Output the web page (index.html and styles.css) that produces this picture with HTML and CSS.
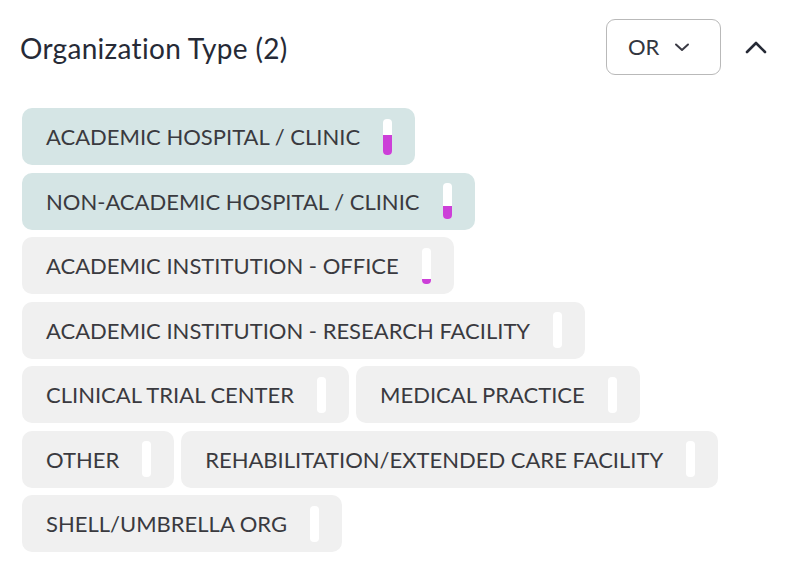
FILE: index.html
```html
<!DOCTYPE html>
<html>
<head>
<meta charset="utf-8">
<link rel="stylesheet" href="styles.css">
</head>
<body>
<div class="panel">
  <div class="header">
    <h2 class="title">Organization Type (2)</h2>
    <button class="op-btn">OR
      <svg class="chev-down" width="16" height="9" viewBox="0 0 16 9"><path d="M2 1.5 L8 7 L14 1.5" fill="none" stroke="#3a3a44" stroke-width="2" stroke-linecap="round" stroke-linejoin="round"/></svg>
    </button>
    <svg class="chev-up" width="22" height="14" viewBox="0 0 22 14"><path d="M2 12 L11 3 L20 12" fill="none" stroke="#262a36" stroke-width="2.6" stroke-linecap="round" stroke-linejoin="round"/></svg>
  </div>
  <div class="chips">
    <div class="chip selected"><span class="label">ACADEMIC HOSPITAL / CLINIC</span><span class="bar"><span class="fill" style="height:55%"></span></span></div>
    <div class="chip selected"><span class="label">NON-ACADEMIC HOSPITAL / CLINIC</span><span class="bar"><span class="fill" style="height:36%"></span></span></div>
    <div class="chip"><span class="label">ACADEMIC INSTITUTION - OFFICE</span><span class="bar"><span class="fill" style="height:12%"></span></span></div>
    <div class="chip"><span class="label">ACADEMIC INSTITUTION - RESEARCH FACILITY</span><span class="bar"><span class="fill" style="height:0%"></span></span></div>
    <div class="chip"><span class="label">CLINICAL TRIAL CENTER</span><span class="bar"><span class="fill" style="height:0%"></span></span></div>
    <div class="chip"><span class="label">MEDICAL PRACTICE</span><span class="bar"><span class="fill" style="height:0%"></span></span></div>
    <div class="chip"><span class="label">OTHER</span><span class="bar"><span class="fill" style="height:0%"></span></span></div>
    <div class="chip"><span class="label">REHABILITATION/EXTENDED CARE FACILITY</span><span class="bar"><span class="fill" style="height:0%"></span></span></div>
    <div class="chip"><span class="label">SHELL/UMBRELLA ORG</span><span class="bar"><span class="fill" style="height:0%"></span></span></div>
  </div>
</div>
</body>
</html>
```
FILE: styles.css
```css
* { box-sizing: border-box; }
html, body { margin: 0; padding: 0; background: #ffffff; }
body { font-family: Lato, "Open Sans", "Liberation Sans", sans-serif; }

.panel {
  width: 796px;
  padding: 19px 20px 0 20px;
}

.header {
  display: flex;
  align-items: center;
  height: 56px;
}

.title {
  flex: 1;
  margin: 0 0 -2px 0;
  font-size: 28px;
  font-weight: 400;
  color: #262a36;
  letter-spacing: 0.3px;
}

.op-btn {
  display: flex;
  align-items: center;
  justify-content: flex-start;
  gap: 15px;
  width: 115px;
  height: 56px;
  padding: 0 0 2px 21px;
  border: 1px solid #b9b9b9;
  border-radius: 9px;
  background: #fff;
  font-family: inherit;
  font-size: 22px;
  color: #333640;
}

.chev-down { margin-top: 2px; }

.chev-up {
  margin-left: 24px;
  margin-right: 9px;
}

.chips {
  display: flex;
  flex-wrap: wrap;
  gap: 7.5px 7px;
  margin-top: 33px;
  padding-left: 2px;
  width: 756px;
}

.chip {
  display: flex;
  align-items: center;
  gap: 23px;
  height: 57px;
  padding: 0 23px 0 24px;
  border-radius: 10px;
  background: #f0f0f0;
  color: #3a3a3f;
  font-size: 22px;
  letter-spacing: 0;
}

.chip.selected { background: #d5e5e5; }

.bar {
  display: flex;
  flex-direction: column;
  justify-content: flex-end;
  width: 9px;
  height: 36px;
  border-radius: 4px;
  background: #ffffff;
  overflow: hidden;
}

.fill {
  display: block;
  width: 100%;
  background: #cc3fd8;
}
```
